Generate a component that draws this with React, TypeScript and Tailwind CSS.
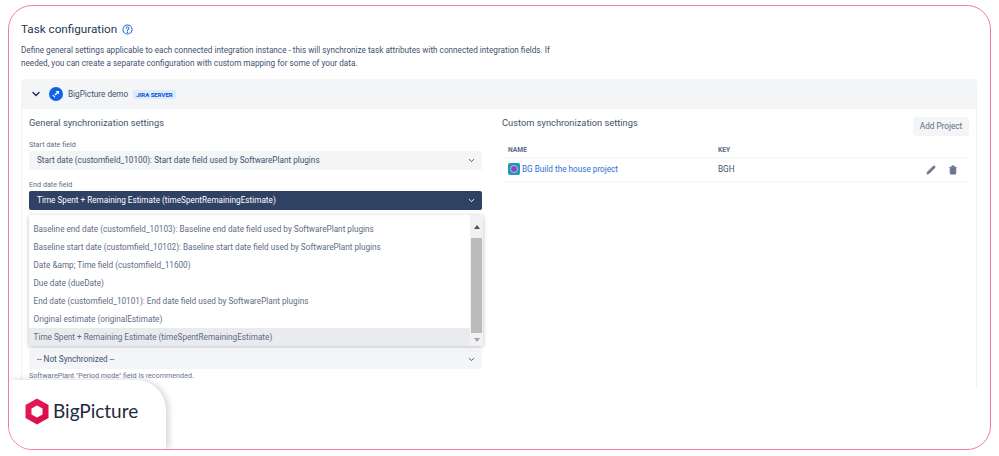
import { ChevronDown, Pencil, Trash2 } from "lucide-react";

const options = [
  "Baseline end date (customfield_10103): Baseline end date field used by SoftwarePlant plugins",
  "Baseline start date (customfield_10102): Baseline start date field used by SoftwarePlant plugins",
  "Date &amp; Time field (customfield_11600)",
  "Due date (dueDate)",
  "End date (customfield_10101): End date field used by SoftwarePlant plugins",
  "Original estimate (originalEstimate)",
];

function Select({ label, dark }: { label: string; dark?: boolean }) {
  return (
    <div
      className={`h-[19px] flex items-center justify-between pl-2 pr-[6px] rounded-[2px] text-[8.2px] ${
        dark ? "bg-[#2f4263] text-white" : "bg-[#f4f5f7] text-[#42526e]"
      }`}
    >
      <span>{label}</span>
      <ChevronDown size={9} strokeWidth={2.5} />
    </div>
  );
}

function Dropdown() {
  return (
    <div className="absolute left-[7px] top-[106px] w-[454px] h-[131px] flex bg-white rounded-[2px] shadow-[0_1px_4px_rgba(9,30,66,0.3)] text-[8.2px] text-[#5e6c84] overflow-hidden z-10">
      <div className="flex-1 pt-[5px]">
        {options.map((o) => (
          <div key={o} className="h-[18px] flex items-center pl-[4.5px]">
            {o}
          </div>
        ))}
        <div className="h-[18px] flex items-center pl-[4.5px] bg-[#e9ebef]">
          Time Spent + Remaining Estimate (timeSpentRemainingEstimate)
        </div>
      </div>
      <div className="w-[13px] bg-[#f1f1f1] flex flex-col items-center">
        <div className="h-[23px] flex items-center justify-center text-[#505050]">
          <svg width="6" height="4" viewBox="0 0 6 4">
            <path d="M3 0 6 4H0z" fill="currentColor" />
          </svg>
        </div>
        <div className="w-[11px] h-[95px] bg-[#bbbbbb]" />
        <div className="flex-1 flex items-center justify-center text-[#a3a3a3]">
          <svg width="6" height="4" viewBox="0 0 6 4">
            <path d="M0 0h6L3 4z" fill="currentColor" />
          </svg>
        </div>
      </div>
    </div>
  );
}

function Logo() {
  return (
    <div className="absolute left-0 bottom-0 w-[157px] h-[69px] bg-white rounded-tr-[30px] shadow-[3px_0_6px_rgba(0,0,0,0.16)] flex items-center pl-[16px] pb-[6px] gap-[4px] z-20">
      <svg width="24" height="27" viewBox="0 0 24 27">
        <defs>
          <linearGradient id="hex" x1="0" y1="0" x2="1" y2="1">
            <stop offset="0" stopColor="#ea1b5b" />
            <stop offset="1" stopColor="#d40d48" />
          </linearGradient>
        </defs>
        <path d="M12 0.5 23.5 7v13L12 26.5.5 20V7z" fill="url(#hex)" />
        <path d="M12 7.5 17.5 10.5v6L12 19.5 6.5 16.5v-6z" fill="#fff" />
      </svg>
      <span className="font-['Lato',sans-serif] text-[19px] text-[#1f2a3c]">BigPicture</span>
    </div>
  );
}

export default function App() {
  return (
    <div className="w-[999px] h-[456px] bg-white pt-[5px] px-[8px] pb-[6px] font-['Roboto',sans-serif] overflow-hidden">
      <div className="relative h-full border border-[#f27da3] rounded-[24px] overflow-hidden pl-[12px] pr-[12px] pt-[15px]">
        <div className="flex items-center gap-[5px] h-[18px]">
          <h1 className="text-[11.7px] text-[#253858]">Task configuration</h1>
          <svg width="11" height="11" viewBox="0 0 24 24" fill="none" stroke="#1f6fd6" strokeWidth="2.2" className="-mt-[2px]">
            <circle cx="12" cy="12" r="10" />
            <path d="M9 9.5a3 3 0 1 1 4.5 2.6c-1 .6-1.5 1.2-1.5 2.4" strokeLinecap="round" />
            <circle cx="12" cy="18" r="0.8" fill="#1f6fd6" />
          </svg>
        </div>
        <p className="mt-[5px] text-[8.18px] leading-[13px] text-[#42526e] w-[540px]">
          Define general settings applicable to each connected integration instance - this will synchronize task attributes with connected integration fields. If needed, you can create a separate configuration with custom mapping for some of your data.
        </p>
        <div className="mt-[9px] mr-[1px] rounded-[2px]">
          <div className="h-[30px] bg-[#f4f5f7] rounded-t-[3px] flex items-center pl-[9px]">
            <ChevronDown size={12} strokeWidth={3} className="text-[#253858]" />
            <div className="ml-[7px] w-[14px] h-[14px] rounded-full bg-[#0f62ea] flex items-center justify-center">
              <svg width="8" height="8" viewBox="0 0 8 8" fill="#fff">
                <path d="M3.5 1H7v3.5L5.8 3.2 3.5 5.5 2.5 4.5 4.8 2.2z" />
                <path d="M1 4.5 3.5 7 2.5 7.5.5 5.5z" />
              </svg>
            </div>
            <span className="ml-[5px] text-[8.2px] text-[#42526e]">BigPicture demo</span>
            <span className="ml-[5px] px-[3px] h-[9px] leading-[9px] rounded-[2px] bg-[#deebff] text-[6px] font-bold text-[#0052cc]">JIRA SERVER</span>
          </div>
          <div className="relative flex h-[279px] border-r border-[#f1f2f4] border-l">
            <div className="w-[477px] pl-[7px] pt-[7px] pr-[17px]">
              <h2 className="h-[13px] leading-[13px] text-[9.3px] text-[#42526e]">General synchronization settings</h2>
              <div className="mt-[11px] h-[10px] leading-[10px] text-[7.2px] text-[#5e6c84]">Start date field</div>
              <div className="mt-[1px]"><Select label="Start date (customfield_10100): Start date field used by SoftwarePlant plugins" /></div>
              <div className="mt-[10px] h-[10px] leading-[10px] text-[7.2px] text-[#5e6c84]">End date field</div>
              <div className="mt-[1px]"><Select dark label="Time Spent + Remaining Estimate (timeSpentRemainingEstimate)" /></div>
              <div className="mt-[140px]"><Select label="-- Not Synchronized --" /></div>
              <div className="mt-[2px] text-[7.2px] leading-[10px] text-[#6b778c]">SoftwarePlant "Period mode" field is recommended.</div>
            </div>
            <div className="flex-1 pl-[3px] pr-[7px] pt-[7px]">
              <div className="flex justify-between items-start h-[27px]">
                <h2 className="h-[13px] leading-[13px] text-[9.3px] text-[#42526e]">Custom synchronization settings</h2>
                <button className="mt-[1px] h-[19px] w-[56px] rounded-[3px] bg-[#f4f5f7] text-[8.2px] text-[#5e6c84]">Add Project</button>
              </div>
              <div className="h-[15px] flex items-center border-b border-[#f4f5f7] text-[6.7px] font-bold text-[#5e6c84]">
                <span className="pl-[6px] w-[216px]">NAME</span>
                <span>KEY</span>
              </div>
              <div className="h-[24px] flex items-center border-b border-[#f4f5f7] text-[8.2px]">
                <div className="pl-[6px] w-[216px] flex items-center gap-[2px] text-[#2f6fd0]">
                  <div className="w-[12px] h-[12px] rounded-[2px] bg-[#1d9bb0] flex items-center justify-center">
                    <div className="w-[8px] h-[8px] rounded-full bg-[#7e4bc2] border border-[#c9b6ea]" />
                  </div>
                  <span>BG Build the house project</span>
                </div>
                <span className="text-[#42526e]">BGH</span>
                <div className="ml-auto flex items-center gap-[12px] pr-[11px] text-[#6b778c]">
                  <Pencil size={10} fill="currentColor" strokeWidth={1.5} />
                  <Trash2 size={10} fill="currentColor" strokeWidth={1.5} />
                </div>
              </div>
            </div>
            <Dropdown />
          </div>
        </div>
        <Logo />
      </div>
    </div>
  );
}
